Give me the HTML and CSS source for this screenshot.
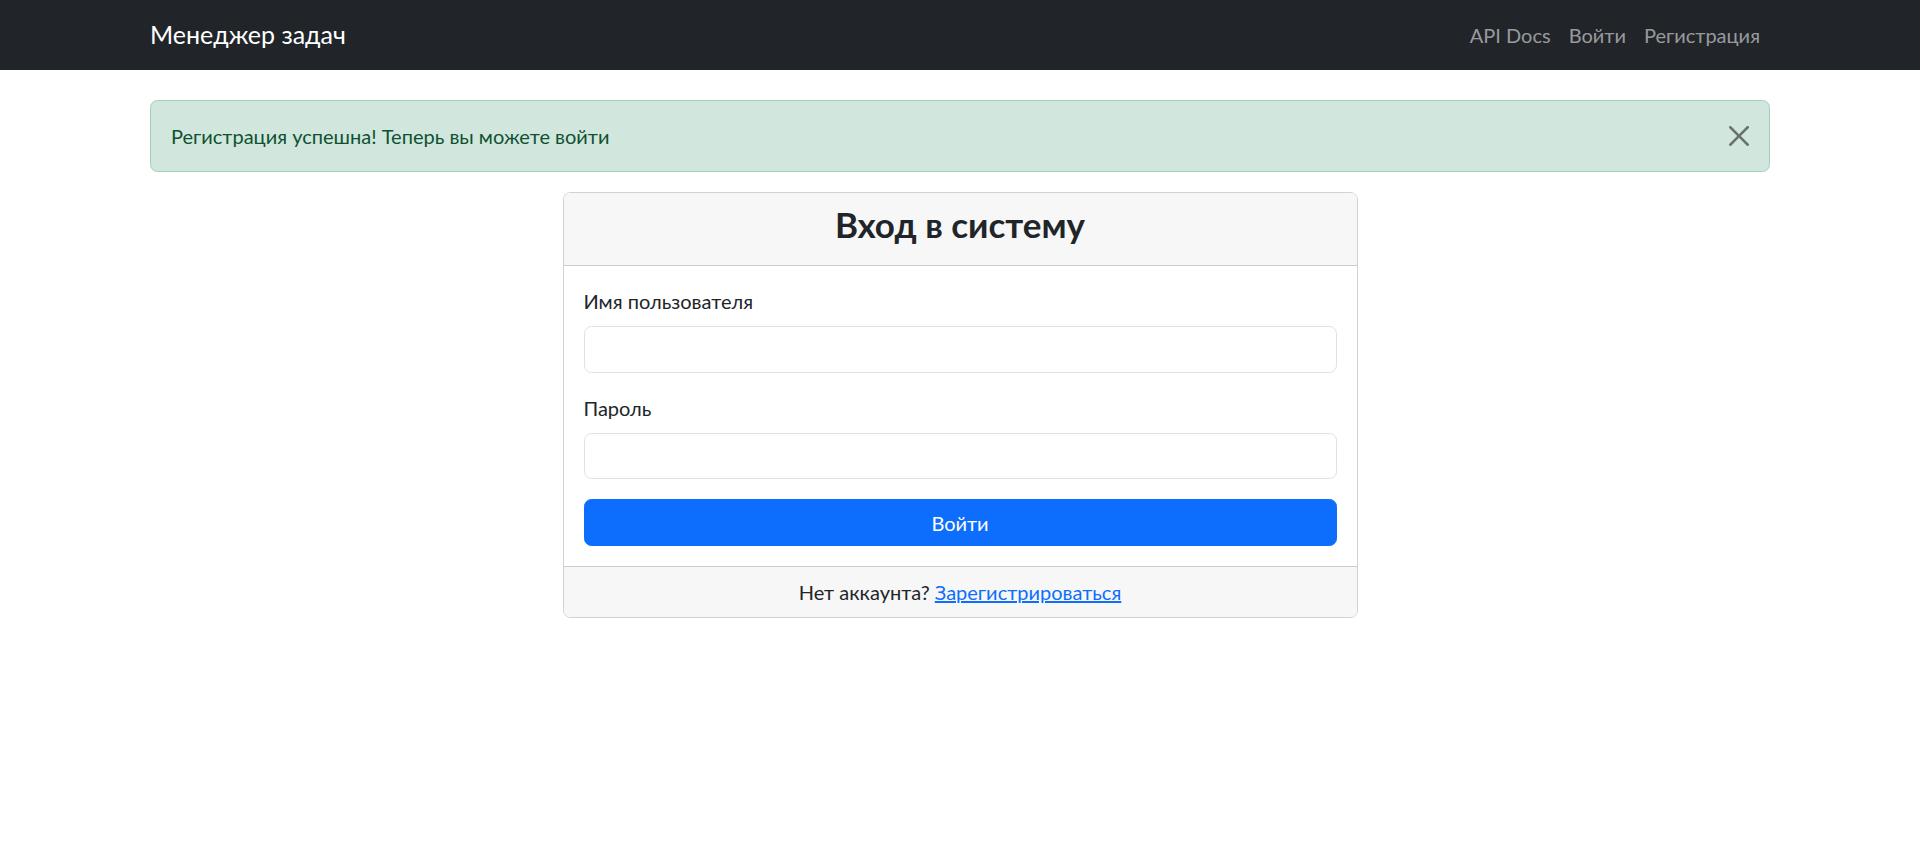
FILE: index.html
```html
<!DOCTYPE html>
<html lang="ru">
<head>
<meta charset="utf-8">
<title>Вход в систему</title>
<link rel="stylesheet" href="styles.css">
</head>
<body>
<nav class="navbar">
  <div class="container nav-inner">
    <a class="brand" href="#">Менеджер задач</a>
    <ul class="nav-links">
      <li><a href="#">API Docs</a></li>
      <li><a href="#">Войти</a></li>
      <li><a href="#">Регистрация</a></li>
    </ul>
  </div>
</nav>
<main class="container main">
  <div class="alert">
    <span>Регистрация успешна! Теперь вы можете войти</span>
    <button class="btn-close" type="button" aria-label="Close">
      <svg viewBox="0 0 16 16" width="20" height="20"><path d="M.293.293a1 1 0 0 1 1.414 0L8 6.586 14.293.293a1 1 0 1 1 1.414 1.414L9.414 8l6.293 6.293a1 1 0 0 1-1.414 1.414L8 9.414l-6.293 6.293a1 1 0 0 1-1.414-1.414L6.586 8 .293 1.707a1 1 0 0 1 0-1.414"/></svg>
    </button>
  </div>
  <div class="card">
    <div class="card-header"><h3>Вход в систему</h3></div>
    <form class="card-body">
      <div class="field">
        <label class="form-label" for="u">Имя пользователя</label>
        <input class="form-control" id="u" type="text">
      </div>
      <div class="field">
        <label class="form-label" for="p">Пароль</label>
        <input class="form-control" id="p" type="password">
      </div>
      <button class="btn-primary" type="button">Войти</button>
    </form>
    <div class="card-footer">Нет аккаунта? <a href="#">Зарегистрироваться</a></div>
  </div>
</main>
</body>
</html>
```
FILE: styles.css
```css
*{box-sizing:border-box}
body{margin:0;font-family:Lato,"Noto Sans",sans-serif;font-size:20px;line-height:1.5;color:#212529;background:#fff}
.container{width:1620px;margin:0 auto}
.navbar{background:#212529;height:70px;display:flex;align-items:center}
.nav-inner{display:flex;align-items:center;justify-content:space-between}
.brand{color:#fff;text-decoration:none;font-size:25px;line-height:37.5px}
.nav-links{list-style:none;margin:0;padding:0;display:flex}
.nav-links a{display:block;padding:10px 9px;color:rgba(255,255,255,.55);text-decoration:none}
.nav-links li:last-child a{padding-right:10px}
.main{padding-top:30px}
.alert{position:relative;background:#d1e7dd;border:1px solid #a3cfbb;color:#0f5132;border-radius:7.5px;padding:20px 75px 20px 20px;margin-bottom:20px}
.btn-close{position:absolute;top:0;right:0;border:0;background:transparent;padding:25px 20px;display:flex;opacity:.5;cursor:pointer}
.btn-close svg{fill:#000;display:block}
.card{width:795px;margin:0 auto;border:1px solid rgba(0,0,0,.175);border-radius:7.5px;overflow:hidden}
.card-header{background:#f7f7f7;border-bottom:1px solid rgba(0,0,0,.175);padding:10px 20px;text-align:center}
.card-header h3{margin:0 0 10px;font-size:35px;line-height:42px;font-weight:700}
.card-body{display:block;padding:20px;margin:0}
.field{margin-bottom:20px}
.form-label{display:block;height:30px;margin-bottom:10px}
.form-control{display:block;width:100%;height:46.5px;padding:7.5px 15px;font:inherit;border:1px solid #dee2e6;border-radius:7.5px;background:#fff;color:#212529}
.btn-primary{display:block;width:100%;height:47px;background:#0d6efd;color:#fff;border:1px solid #0d6efd;border-radius:7.5px;font:inherit;cursor:pointer}
.card-footer{background:#f7f7f7;border-top:1px solid rgba(0,0,0,.175);padding:10px 20px;text-align:center;line-height:30px}
.card-footer a{color:#0d6efd;text-decoration:underline}
```
